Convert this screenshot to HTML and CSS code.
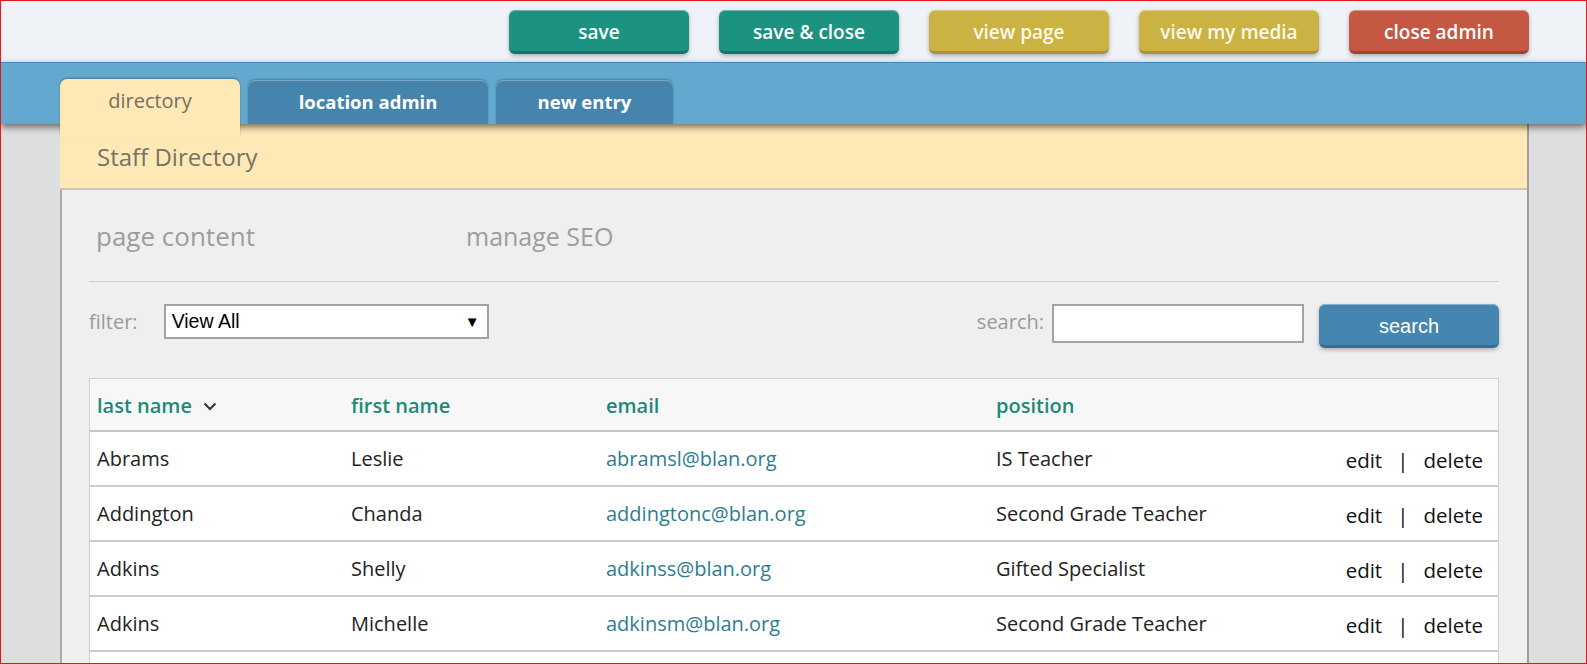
FILE: index.html
```html
<!DOCTYPE html>
<html lang="en">
<head>
<meta charset="utf-8">
<title>Staff Directory - admin</title>
<link rel="stylesheet" href="styles.css">
</head>
<body>
<div class="frame">
  <header class="topbar">
    <button class="btn btn-teal">save</button>
    <button class="btn btn-teal">save &amp; close</button>
    <button class="btn btn-gold">view page</button>
    <button class="btn btn-gold">view my media</button>
    <button class="btn btn-red">close admin</button>
  </header>
  <nav class="band">
    <div class="tab tab-active tab-directory">directory</div>
    <div class="tab tab-location">location admin</div>
    <div class="tab tab-new">new entry</div>
  </nav>
  <main class="main">
    <section class="panel">
      <div class="panel-head">Staff Directory</div>
      <div class="panel-body">
        <div class="subnav">
          <span class="subnav-item subnav-first">page content</span>
          <span class="subnav-item">manage SEO</span>
        </div>
        <div class="toolbar">
          <label class="lbl">filter:</label>
          <div class="select"><span>View All</span><span class="arrow">▼</span></div>
          <div class="spacer"></div>
          <label class="lbl">search:</label>
          <div class="input"></div>
          <button class="btn btn-blue">search</button>
        </div>
        <table class="grid">
          <colgroup>
            <col class="c1"><col class="c2"><col class="c3"><col class="c4"><col class="c5">
          </colgroup>
          <thead>
            <tr>
              <th class="first">last name <svg class="chev" width="14" height="9" viewBox="0 0 14 9"><path d="M1.5 1.5 L7 7 L12.5 1.5" fill="none" stroke="#333" stroke-width="2"/></svg></th>
              <th>first name</th>
              <th>email</th>
              <th>position</th>
              <th></th>
            </tr>
          </thead>
          <tbody>
            <tr>
              <td class="first">Abrams</td><td>Leslie</td><td><a class="mail">abramsl@blan.org</a></td><td>IS Teacher</td>
              <td class="act"><span>edit</span><span class="sep">|</span><span>delete</span></td>
            </tr>
            <tr>
              <td class="first">Addington</td><td>Chanda</td><td><a class="mail">addingtonc@blan.org</a></td><td>Second Grade Teacher</td>
              <td class="act"><span>edit</span><span class="sep">|</span><span>delete</span></td>
            </tr>
            <tr>
              <td class="first">Adkins</td><td>Shelly</td><td><a class="mail">adkinss@blan.org</a></td><td>Gifted Specialist</td>
              <td class="act"><span>edit</span><span class="sep">|</span><span>delete</span></td>
            </tr>
            <tr>
              <td class="first">Adkins</td><td>Michelle</td><td><a class="mail">adkinsm@blan.org</a></td><td>Second Grade Teacher</td>
              <td class="act"><span>edit</span><span class="sep">|</span><span>delete</span></td>
            </tr>
            <tr>
              <td class="first"></td><td></td><td></td><td></td><td class="act"></td>
            </tr>
          </tbody>
        </table>
      </div>
    </section>
  </main>
</div>
</body>
</html>
```

FILE: styles.css
```css
* { box-sizing: border-box; }
html, body { margin: 0; padding: 0; }
body { background: #dedede; }

.frame {
  width: 1587px;
  height: 664px;
  border: 1px solid #e3161c;
  overflow: hidden;
  background: #dedede;
  font-family: "Open Sans", "Noto Sans", sans-serif;
}

/* top action bar */
.topbar {
  height: 61px;
  background: #eff3f7;
  display: flex;
  justify-content: flex-end;
  align-items: flex-start;
  gap: 30px;
  padding: 9px 57px 0 0;
}
.btn {
  width: 180px;
  height: 44px;
  border: 0;
  border-radius: 6px;
  color: #fff;
  font-family: "Open Sans", sans-serif;
  font-weight: 600;
  font-size: 19px;
  display: flex;
  align-items: center;
  justify-content: center;
  padding: 2px 0 0;
  cursor: pointer;
  box-shadow: 0 2px 4px rgba(0,0,0,.28), inset 0 1px 0 rgba(255,255,255,.35);
}
.btn-teal { background: #1b9380; border-bottom: 3px solid #147565; }
.btn-gold { background: #cab343; border-bottom: 3px solid #a9943a; color: #fdf8e8; }
.btn-red  { background: #c55843; border-bottom: 3px solid #a04331; }
.btn-blue {
  background: #4586b0;
  border-bottom: 3px solid #346e95;
  font-family: "Liberation Sans", Arial, sans-serif;
  font-weight: 400;
  font-size: 20px;
  padding-top: 4px;
}

/* blue tab band */
.band {
  height: 62px;
  background: #63a8ce;
  border-top: 1px solid #4a87b1;
  position: relative;
  z-index: 1;
  box-shadow: 0 3px 7px rgba(0,0,0,.55);
  display: flex;
  align-items: flex-end;
  gap: 8px;
  padding-left: 59px;
}
.tab {
  height: 44px;
  border-radius: 7px 7px 0 0;
  background: #4585ad;
  color: #fff;
  font-weight: 700;
  font-size: 18.5px;
  display: flex;
  align-items: center;
  justify-content: center;
  padding-bottom: 2px;
  box-shadow: 0 -1px 2px rgba(0,0,0,.25), inset 0 1px 0 rgba(255,255,255,.3);
}
.tab-directory { width: 180px; }
.tab-location { width: 240px; }
.tab-new { width: 177px; }
.tab-active {
  background: #fee9b6;
  color: #776e62;
  font-weight: 400;
  font-size: 20px;
  height: 57px;
  margin-bottom: -12px;
  align-items: flex-start;
  padding: 8px 0 0;
  box-shadow: 0 -1px 2px rgba(0,0,0,.3);
}

/* main area */
.main {
  display: flex;
  padding: 0 57px 0 59px;
}
.panel {
  flex: 1;
  display: flex;
  flex-direction: column;
  border-right: 2px solid #9d9d9d;
}
.panel-head {
  flex-shrink: 0;
  height: 66px;
  background: #fee9b6;
  border-bottom: 2px solid #cdc5ae;
  padding: 0 0 0 37px;
  display: flex;
  align-items: center;
  font-size: 24px;
  color: #7a7165;
}
.panel-body {
  flex-shrink: 0;
  background: #efefef;
  border-left: 2px solid #a9a9a9;
  padding: 0 28px 0 27px;
}

.subnav {
  height: 92px;
  border-bottom: 1px solid #cfcfcf;
  display: flex;
  align-items: center;
  padding: 0 0 0 7px;
  color: #9d9d9d;
}
.subnav-item { font-size: 25px; }
.subnav-first { width: 370px; font-size: 26px; }

.toolbar {
  display: flex;
  align-items: flex-start;
  padding-top: 22px;
  height: 66px;
}
.lbl {
  color: #9a9a9a;
  font-size: 20px;
  line-height: 35px;
}
.toolbar .lbl:first-child { margin-right: 26px; }
.select {
  width: 325px;
  height: 35px;
  background: #fff;
  border: 2px solid #a2a2a2;
  display: flex;
  align-items: center;
  justify-content: space-between;
  padding: 0 7px 0 6px;
  font-family: "Liberation Sans", Arial, sans-serif;
  font-size: 19.5px;
  color: #000;
}
.arrow { font-size: 15px; }
.spacer { flex: 1; }
.toolbar .lbl:nth-of-type(2) { margin-right: 8px; }
.input {
  width: 252px;
  height: 39px;
  background: #fff;
  border: 2px solid #a4a4a4;
  margin-right: 15px;
}

/* table */
.grid {
  width: 1410px;
  margin-top: 30px;
  border-collapse: separate;
  border-spacing: 0;
  table-layout: fixed;
  border: 1px solid #d0d0d0;
  border-bottom: 0;
  font-size: 20px;
}
.c1 { width: 253px; }
.c2 { width: 255px; }
.c3 { width: 390px; }
.c4 { width: 312px; }
.c5 { width: 198px; }
.grid th {
  height: 53px;
  background: #f7f7f7;
  border-bottom: 2px solid #c6c6c6;
  text-align: left;
  color: #1b8a79;
  font-weight: 600;
  padding: 2px 0 0 8px;
  vertical-align: middle;
  white-space: nowrap;
}
.grid td {
  height: 55px;
  background: #fff;
  border-bottom: 2px solid #cccccc;
  color: #232323;
  padding: 0 0 1px 8px;
  vertical-align: middle;
  white-space: nowrap;
}
.grid .first { padding-left: 7px; }
.chev { margin-left: 6px; vertical-align: middle; position: relative; top: -1px; }
.mail { color: #2f7c91; text-decoration: none; }
.grid td.act {
  text-align: right;
  padding: 3px 15px 0 0;
  color: #111;
  font-size: 20.5px;
}
.sep { margin: 0 15px; }
```
